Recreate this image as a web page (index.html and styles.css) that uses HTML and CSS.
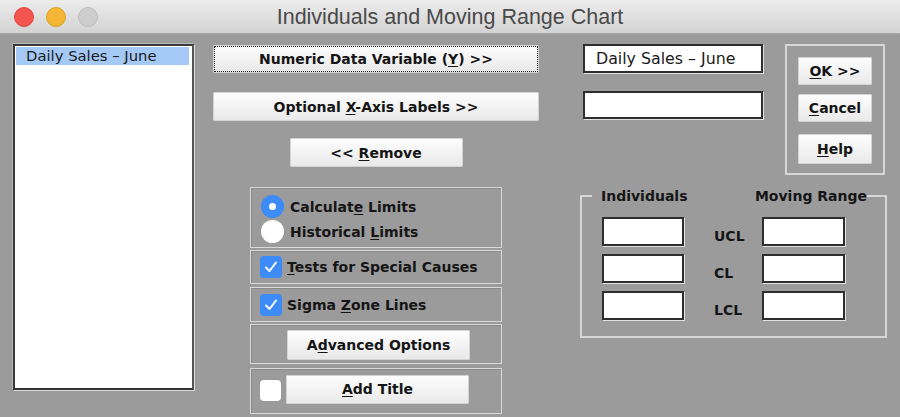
FILE: index.html
```html
<!DOCTYPE html>
<html>
<head>
<meta charset="utf-8">
<link rel="stylesheet" href="styles.css">
</head>
<body>
<div class="window">
  <div class="titlebar">
    <div class="lights">
      <span class="light red"></span>
      <span class="light yellow"></span>
      <span class="light gray"></span>
    </div>
    <div class="title">Individuals and Moving Range Chart</div>
    <div></div>
  </div>
  <div class="content">
    <div class="list">
      <div class="list-item selected">Daily Sales – June</div>
    </div>
    <div class="middle">
      <button class="btn wide focus"><span>Numeric Data Variable (<u>Y</u>) &gt;&gt;</span></button>
      <button class="btn wide second"><span>Optional <u>X</u>-Axis Labels &gt;&gt;</span></button>
      <button class="btn remove"><span>&lt;&lt; <u>R</u>emove</span></button>
      <div class="options">
        <div class="section radios">
          <div class="opt"><span class="radio on"></span><span>Calculat<u>e</u> Limits</span></div>
          <div class="opt"><span class="radio"></span><span>Historical <u>L</u>imits</span></div>
        </div>
        <div class="section row s2">
          <span class="check on"><svg viewBox="0 0 22 22" width="22" height="22"><path d="M6 11.5 L9.5 15 L16 6.5" fill="none" stroke="#fff" stroke-width="2" stroke-linecap="round" stroke-linejoin="round"/></svg></span>
          <span class="lbl"><u>T</u>ests for Special Causes</span>
        </div>
        <div class="section row s3">
          <span class="check on"><svg viewBox="0 0 22 22" width="22" height="22"><path d="M6 11.5 L9.5 15 L16 6.5" fill="none" stroke="#fff" stroke-width="2" stroke-linecap="round" stroke-linejoin="round"/></svg></span>
          <span class="lbl">Sigma <u>Z</u>one Lines</span>
        </div>
        <div class="section row s4">
          <button class="btn sub"><span>A<u>d</u>vanced Options</span></button>
        </div>
        <div class="section row s5">
          <span class="check off"></span>
          <button class="btn sub"><span><u>A</u>dd Title</span></button>
        </div>
      </div>
    </div>
    <div class="right">
      <div class="top-row">
        <div class="fields">
          <div class="field">Daily Sales – June</div>
          <div class="field second"></div>
        </div>
        <div class="actions">
          <button class="btn act"><span><u>O</u>K &gt;&gt;</span></button>
          <button class="btn act"><span><u>C</u>ancel</span></button>
          <button class="btn act help"><span><u>H</u>elp</span></button>
        </div>
      </div>
      <fieldset class="limits">
        <legend><span>Individuals</span><span>Moving Range</span></legend>
        <div class="limits-grid">
          <div class="box"></div><div class="lim">UCL</div><div class="box"></div>
          <div class="box"></div><div class="lim">CL</div><div class="box"></div>
          <div class="box"></div><div class="lim">LCL</div><div class="box"></div>
        </div>
      </fieldset>
    </div>
  </div>
</div>
</body>
</html>
```

FILE: styles.css
```css
* { box-sizing: border-box; }
html, body { margin: 0; padding: 0; }
body {
  width: 900px;
  height: 417px;
  overflow: hidden;
  background: #9a9a9a;
  font-family: "DejaVu Sans", "Liberation Sans", sans-serif;
  color: #111;
}
.window { width: 900px; height: 417px; background: #9b9b9b; }

.titlebar {
  height: 34px;
  display: grid;
  grid-template-columns: 1fr auto 1fr;
  align-items: center;
  background: linear-gradient(#ececec, #d3d3d3);
  border-bottom: 1px solid #a8a8a8;
}
.lights { display: flex; gap: 12px; padding-left: 14px; }
.light { width: 20px; height: 20px; border-radius: 50%; display: block; }
.light.red { background: #f5554f; border: 1px solid #e0443e; }
.light.yellow { background: #f6b635; border: 1px solid #dea123; }
.light.gray { background: #cdcdcd; border: 1px solid #bdbdbd; }
.title {
  font-family: "Liberation Sans", "Helvetica", sans-serif;
  font-size: 21.5px;
  color: #4a4a4a;
  padding-top: 1px;
}

.content { display: flex; align-items: flex-start; padding: 10px 0 0 13px; }

.list {
  width: 181px;
  height: 346px;
  background: #fff;
  border-top: 2px solid #3a3a3a;
  border-left: 2px solid #3a3a3a;
  border-right: 2px solid #555;
  border-bottom: 2px solid #333;
  box-shadow: 1px 1px 0 #dcdcdc, -1px -1px 0 #b5b5b5;
  padding: 1px 3px 0 1px;
}
.list-item { height: 18px; font-size: 14.8px; line-height: 18px; padding-left: 10px; color: #1a1a1a; }
.list-item.selected { background: #a5c9f6; }

.btn {
  font-family: "DejaVu Sans", "Liberation Sans", sans-serif;
  font-weight: bold;
  font-size: 14px;
  color: #151515;
  background: linear-gradient(#fdfdfd, #e9e9e9);
  border: 1px solid #d4d4d4;
  border-radius: 1px;
  padding: 0;
  margin: 0;
  display: flex;
  align-items: center;
  justify-content: center;
  white-space: pre;
}
.btn u { text-decoration-thickness: 1px; text-underline-offset: 2px; }
.btn.focus { outline: 1px dotted #222; outline-offset: -2px; }

.middle {
  margin-left: 19px;
  width: 326px;
  padding-top: 1px;
  display: flex;
  flex-direction: column;
  align-items: center;
}
.btn.wide { width: 326px; height: 28px; }
.btn.wide.second { margin-top: 19px; height: 29px; }
.btn.remove { margin-top: 17px; width: 173px; height: 29px; }

.options {
  margin-top: 20px;
  width: 252px;
  display: flex;
  flex-direction: column;
  gap: 2px;
}
.section {
  border: 1px solid #d9d9d9;
  box-shadow: inset 1px 1px 0 #8a8a8a;
  font-weight: bold;
  font-size: 14px;
  color: #151515;
}
.section u { text-underline-offset: 2px; }
.radios { height: 61px; padding: 7px 0 0 10px; display: flex; flex-direction: column; gap: 2px; }
.opt { display: flex; align-items: center; gap: 6px; height: 23px; }
.radio { width: 23px; height: 23px; border-radius: 50%; background: #fff; display: flex; align-items: center; justify-content: center; flex: none; }
.radio.on { background: #3d8bf6; }
.radio.on::after { content: ""; width: 7px; height: 7px; border-radius: 50%; background: #fff; }

.row { display: flex; align-items: center; padding-left: 9px; }
.s2 { height: 34px; }
.s3 { height: 35px; margin-top: 1px; }
.s4 { height: 40px; padding-left: 36px; padding-top: 2px; }
.s5 { height: 46px; margin-top: 2px; padding-bottom: 4px; }
.check { width: 22px; height: 22px; border-radius: 4px; display: block; flex: none; }
.check.on { background: #3d8bf6; }
.check.off { background: #fff; width: 21px; height: 21px; margin-top: 2px; }
.check svg { display: block; }
.lbl { margin-left: 5px; }
.btn.sub { width: 183px; height: 30px; }
.s5 .btn.sub { margin-left: 5px; height: 29px; }

.right { margin-left: 41px; width: 307px; }
.top-row { display: flex; align-items: flex-start; }
.fields { padding-left: 3px; width: 183px; }
.field {
  width: 180px;
  height: 29px;
  background: #fff;
  border: 2px solid #2e2e2e;
  box-shadow: 1px 1px 0 #e2e2e2;
  font-size: 15.8px;
  line-height: 25px;
  padding-left: 11px;
  color: #1a1a1a;
}
.field.second { margin-top: 18px; height: 28px; }
.actions {
  margin-left: 22px;
  width: 100px;
  height: 131px;
  border: 2px solid #d6d6d6;
  padding: 11px 0 0 11px;
  display: flex;
  flex-direction: column;
  gap: 9px;
}
.btn.act { width: 74px; height: 28px; }
.btn.act.help { margin-top: 3px; height: 30px; }

.limits {
  margin: 13px 0 0 0;
  padding: 0;
  width: 307px;
  height: 150px;
  border: 2px solid #d6d6d6;
}
.limits legend {
  margin-left: 10px;
  padding: 0 0 0 9px;
  width: 275px;
  display: flex;
  justify-content: space-between;
  font-weight: bold;
  font-size: 14px;
  color: #151515;
}
.limits-grid {
  display: grid;
  grid-template-columns: 82px 78px 83px;
  row-gap: 8px;
  grid-auto-rows: 29px;
  padding: 13px 0 0 20px;
  align-items: center;
}
.limits-grid .box {
  height: 29px;
  background: #fff;
  border: 2px solid #2e2e2e;
  box-shadow: 1px 1px 0 #e2e2e2;
}
.lim { font-weight: bold; font-size: 14px; color: #151515; padding-top: 8px; padding-left: 30px; }
```
